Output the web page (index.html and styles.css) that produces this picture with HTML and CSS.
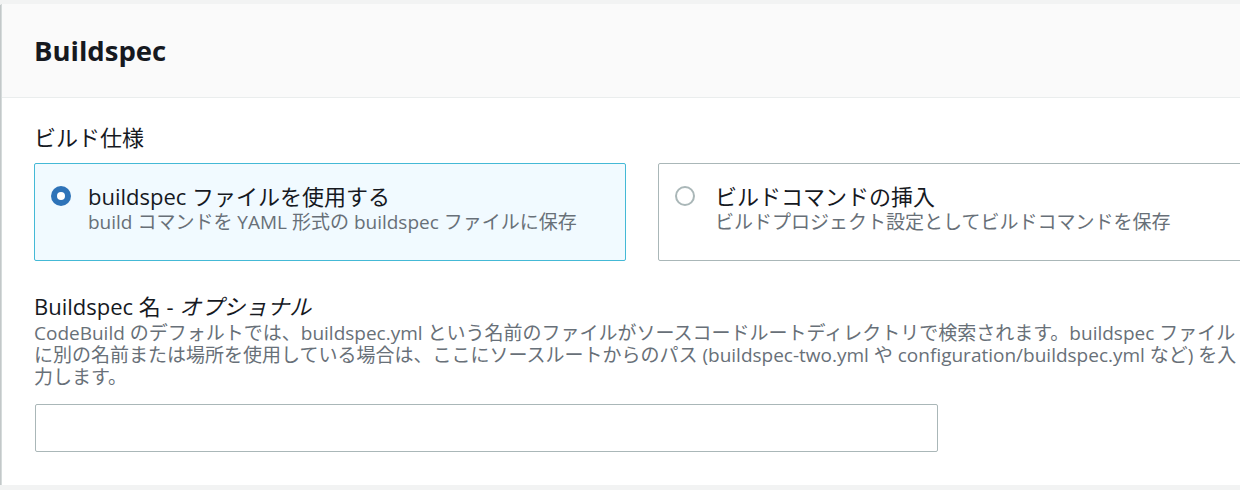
FILE: index.html
```html
<!DOCTYPE html>
<html lang="ja">
<head>
<meta charset="utf-8">
<title>Buildspec</title>
<link rel="stylesheet" href="styles.css">
</head>
<body>
<div class="page">
  <section class="panel">
    <header class="panel-header">
      <h2 class="panel-title">Buildspec</h2>
    </header>
    <div class="panel-body">
      <div class="field-label">ビルド仕様</div>
      <div class="tiles">
        <label class="tile tile-selected">
          <span class="radio radio-on"><span class="radio-dot"></span></span>
          <span class="tile-text">
            <span class="tile-title">buildspec ファイルを使用する</span>
            <span class="tile-desc">build コマンドを YAML 形式の buildspec ファイルに保存</span>
          </span>
        </label>
        <label class="tile">
          <span class="radio radio-off"></span>
          <span class="tile-text">
            <span class="tile-title">ビルドコマンドの挿入</span>
            <span class="tile-desc">ビルドプロジェクト設定としてビルドコマンドを保存</span>
          </span>
        </label>
      </div>
      <div class="field-label field-label-2">Buildspec 名 - <i class="optional">オプショナル</i></div>
      <div class="field-desc">
        <div class="desc-line">CodeBuild のデフォルトでは、buildspec.yml という名前のファイルがソースコードルートディレクトリで検索されます。buildspec ファイル</div>
        <div class="desc-line">に別の名前または場所を使用している場合は、ここにソースルートからのパス (buildspec-two.yml や configuration/buildspec.yml など) を入</div>
        <div class="desc-line">力します。</div>
      </div>
      <input class="text-input" type="text">
    </div>
  </section>
</div>
</body>
</html>
```

FILE: styles.css
```css
html, body {
  margin: 0;
  padding: 0;
  background: #f2f3f3;
  overflow: hidden;
}
body {
  font-family: "Open Sans", "Noto Sans CJK JP", sans-serif;
  color: #16191f;
}
.page {
  padding: 4px 0 0 1px;
  width: 1400px;
}
.panel {
  width: 1320px;
  background: #fff;
  border-left: 1px solid #d5dbdb;
  box-shadow: 0 1px 1px 0 rgba(0, 28, 36, 0.3), -1px 1px 1px 0 rgba(0, 28, 36, 0.15);
}
.panel-header {
  height: 93px;
  background: #fafafa;
  border-bottom: 1px solid #eaeded;
  display: flex;
  align-items: center;
  padding-left: 32px;
}
.panel-title {
  margin: 0;
  font-size: 27.5px;
  font-weight: 700;
  line-height: 34px;
}
.panel-body {
  padding: 26px 32px 33px 32px;
}
.field-label {
  font-size: 22px;
  line-height: 26px;
}
.tiles {
  display: flex;
  gap: 32px;
  margin-top: 13px;
}
.tile {
  box-sizing: border-box;
  width: 592px;
  height: 98px;
  border: 1px solid #aab7b8;
  border-radius: 2px;
  display: flex;
  align-items: flex-start;
  padding: 18px 16px 0 16px;
}
.tile-selected {
  border-color: #44b9d6;
  background: #f1faff;
}
.radio {
  box-sizing: border-box;
  flex: none;
  width: 20px;
  height: 20px;
  border-radius: 50%;
  margin-top: 4px;
  margin-right: 17px;
  display: flex;
  align-items: center;
  justify-content: center;
}
.radio-on {
  background: #2e73b8;
}
.radio-dot {
  width: 8px;
  height: 8px;
  border-radius: 50%;
  background: #fff;
}
.radio-off {
  border: 2px solid #aab7b8;
  background: #fff;
  margin-right: 20px;
}
.tile-text {
  display: flex;
  flex-direction: column;
}
.tile-title {
  font-size: 22px;
  line-height: 28px;
}
.tile-desc {
  font-size: 19px;
  line-height: 24px;
  color: #687078;
}
.field-label-2 {
  margin-top: 32px;
}
.optional {
  font-style: italic;
}
.field-desc {
  margin-top: 3px;
  font-size: 19px;
  line-height: 22px;
  color: #687078;
  white-space: nowrap;
}
.text-input {
  display: block;
  box-sizing: border-box;
  width: 903px;
  height: 48px;
  margin: 16px 0 0 1px;
  border: 1px solid #aab7b8;
  border-radius: 2px;
  background: #fff;
  font-family: inherit;
  font-size: 18px;
  padding: 0 12px;
}
```
